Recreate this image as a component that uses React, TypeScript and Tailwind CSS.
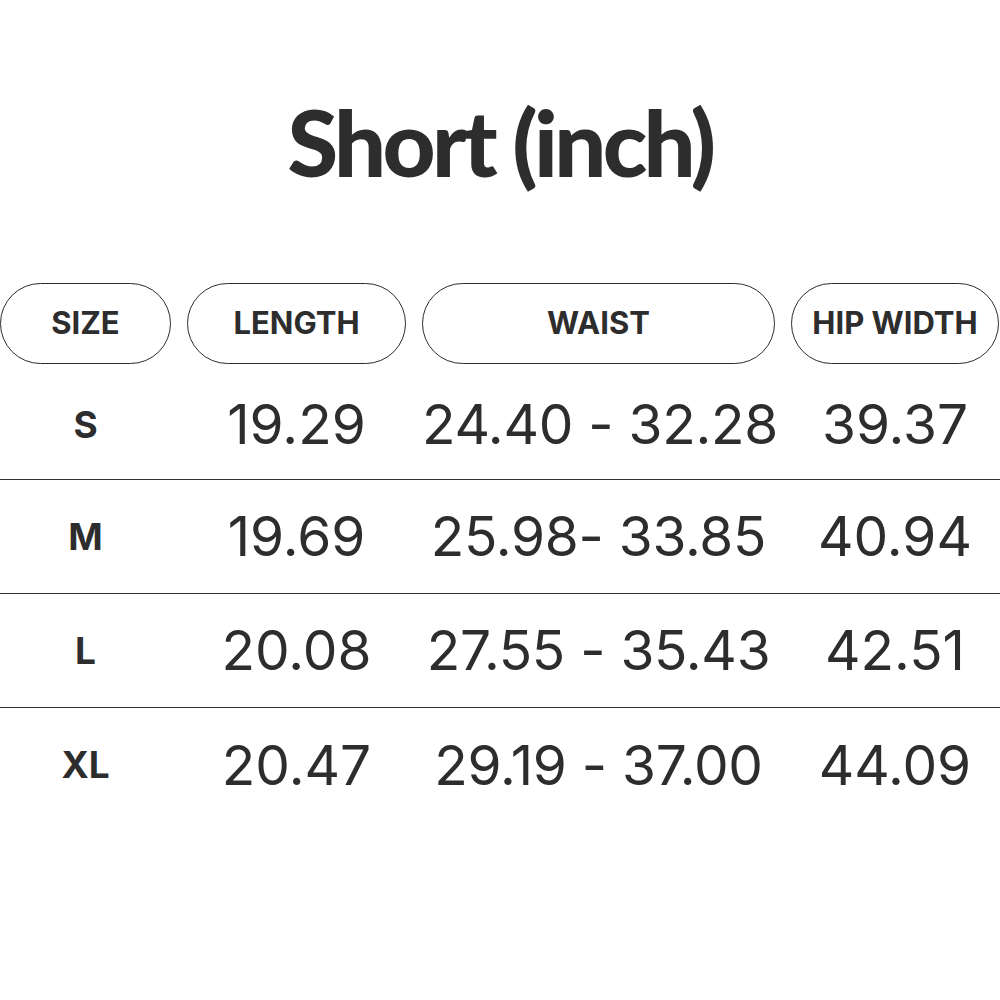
import React from "react";

const rows = [
  { size: "S", length: "19.29", waist: "24.40 - 32.28", hip: "39.37" },
  { size: "M", length: "19.69", waist: "25.98- 33.85", hip: "40.94" },
  { size: "L", length: "20.08", waist: "27.55 - 35.43", hip: "42.51" },
  { size: "XL", length: "20.47", waist: "29.19 - 37.00", hip: "44.09" },
];

const cols = "grid grid-cols-[171px_219px_353px_208px] gap-x-4";

export default function App() {
  return (
    <div className="w-[1000px] h-[1000px] bg-white text-[#2d2d2d] font-['Inter','Liberation_Sans',sans-serif]">
      <h1 className="pt-[96px] h-[188px] text-center text-[92px] leading-none font-black tracking-[-0.04em] font-['Lato','Liberation_Sans',sans-serif]">
        Short (inch)
      </h1>

      <div className={`${cols} mt-[95px]`}>
        {["SIZE", "LENGTH", "WAIST", "HIP WIDTH"].map((h) => (
          <div
            key={h}
            className="h-[81px] rounded-full border-[1.5px] border-[#2d2d2d] flex items-center justify-center text-[31px] font-bold"
          >
            {h}
          </div>
        ))}
      </div>

      <div>
        {rows.map((r, i) => (
          <div
            key={r.size}
            className={`${cols} items-center ${i === 0 ? "h-[116px] pt-[6px]" : "h-[114px]"} ${i < rows.length - 1 ? "border-b border-[#333]" : ""}`}
          >
            <div className="text-center text-[37px] font-bold">{r.size}</div>
            <div className="text-center text-[55px]">{r.length}</div>
            <div className="text-center text-[55px] whitespace-nowrap tracking-[-0.005em]">{r.waist}</div>
            <div className="text-center text-[55px]">{r.hip}</div>
          </div>
        ))}
      </div>
    </div>
  );
}
